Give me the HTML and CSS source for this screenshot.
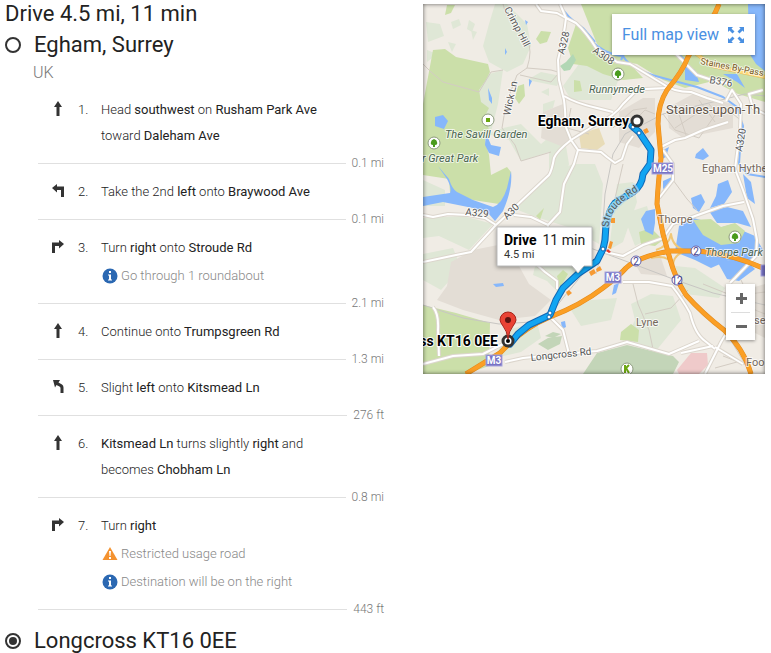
FILE: index.html
```html
<!DOCTYPE html>
<html lang="en">
<head>
    <meta charset="UTF-8">
    <meta name="viewport" content="width=device-width, initial-scale=1.0">
    <title>Egham, Surrey to Longcross KT16 0EE</title>
    <link rel="stylesheet" href="styles.css">
</head>
<body>
    <!-- shared icons -->
    <svg class="sprite" aria-hidden="true">
        <symbol id="straight" viewBox="0 0 16 16"><path d="M8 0l4 6H9.500V15h-3V6H4z"/></symbol>
        <symbol id="left" viewBox="0 0 16 16"><path d="M2 5l5-4v2.500h7V14h-3V7H7v2.500z"/></symbol>
        <symbol id="right" viewBox="0 0 16 16"><path d="M14 5L9 1v2.500H2V14h3V7h4v2.500z"/></symbol>
        <symbol id="slight" viewBox="0 0 16 16"><path d="M3 1h7L8.500 3.500l3.500 2q1.500 1 1.500 3V14h-3V9q0-1-1-1.600L6.500 6 5 8.500z"/></symbol>
        <symbol id="info" viewBox="0 0 16 16"><circle cx="8" cy="8" r="7.500" fill="#2b68b2"/><path fill="#fff" d="M7 3h2v2H7zM6 6.500h3v5h1v1H6v-1h1v-4H6z"/></symbol>
        <symbol id="warn" viewBox="0 0 16 16"><path fill="#f4922f" d="M8 1l7.500 13H.5z"/><path fill="#fff" d="M7 5h2l-.5 5h-1zM7 11h2v2H7z"/></symbol>
    </svg>

    <main class="page">
        <div class="directions">
            <h1>Drive 4.5 mi, 11 min</h1>
            <div class="place">
                <svg class="dot" viewBox="0 0 16 16"><circle cx="8" cy="8" r="7"/></svg>
                <h2>Egham, Surrey</h2>
            </div>
            <p class="country">UK</p>

            <ol class="steps">
                <li>
                    <div class="step">
                        <svg class="arrow"><use href="#straight"/></svg>
                        <span class="num">1.</span>
                        <p>Head <b>southwest</b> on <b>Rusham Park Ave</b> toward <b>Daleham Ave</b></p>
                    </div>
                    <div class="dist">0.1 mi</div>
                </li>
                <li>
                    <div class="step">
                        <svg class="arrow"><use href="#left"/></svg>
                        <span class="num">2.</span>
                        <p>Take the 2nd <b>left</b> onto <b>Braywood Ave</b></p>
                    </div>
                    <div class="dist">0.1 mi</div>
                </li>
                <li>
                    <div class="step">
                        <svg class="arrow"><use href="#right"/></svg>
                        <span class="num">3.</span>
                        <p>Turn <b>right</b> onto <b>Stroude Rd</b></p>
                    </div>
                    <div class="note"><svg><use href="#info"/></svg>Go through 1 roundabout</div>
                    <div class="dist">2.1 mi</div>
                </li>
                <li>
                    <div class="step">
                        <svg class="arrow"><use href="#straight"/></svg>
                        <span class="num">4.</span>
                        <p>Continue onto <b>Trumpsgreen Rd</b></p>
                    </div>
                    <div class="dist">1.3 mi</div>
                </li>
                <li>
                    <div class="step">
                        <svg class="arrow"><use href="#slight"/></svg>
                        <span class="num">5.</span>
                        <p>Slight <b>left</b> onto <b>Kitsmead Ln</b></p>
                    </div>
                    <div class="dist">276 ft</div>
                </li>
                <li>
                    <div class="step">
                        <svg class="arrow"><use href="#straight"/></svg>
                        <span class="num">6.</span>
                        <p><b>Kitsmead Ln</b> turns slightly <b>right</b> and becomes <b>Chobham Ln</b></p>
                    </div>
                    <div class="dist">0.8 mi</div>
                </li>
                <li>
                    <div class="step">
                        <svg class="arrow"><use href="#right"/></svg>
                        <span class="num">7.</span>
                        <p>Turn <b>right</b></p>
                    </div>
                    <div class="note"><svg><use href="#warn"/></svg>Restricted usage road</div>
                    <div class="note"><svg><use href="#info"/></svg>Destination will be on the right</div>
                    <div class="dist">443 ft</div>
                </li>
            </ol>

            <div class="place end">
                <svg class="dot" viewBox="0 0 16 16"><circle cx="8" cy="8" r="7"/><circle class="fill" cx="8" cy="8" r="4"/></svg>
                <h2>Longcross KT16 0EE</h2>
            </div>
        </div>

        <div class="map">
            <svg class="tiles" viewBox="0 0 342 370" preserveAspectRatio="xMidYMid slice">
                <defs>
                    <g id="majors">
                        <path d="M137 0L143 14Q141 32 135 56L136 76 141 96Q143 112 142 121L148 136 155 146 151 160 141 180 137 208 125 221"/>
                        <path d="M0 258L33 251 48 248 73 221 126 171Q129 166 131 154 134 147 148 136L172 121Q192 112 200 100L212 88 222 85 244 84"/>
                        <path d="M113 0L118 7 134 9 143 14 153 19Q163 28 173 44L194 58 207 60 240 80Q250 88 268 88L284 94 300 99"/>
                        <path d="M252 49L274 71 292 77 309 80M303 97L309 86 318 100 317 126 312 165 320 186 330 215 334 236 333 252 312 274 307 279"/>
                        <path d="M0 211L10 213 25 210 45 211 62 214 73 221M91 211L108 213 125 221 124 233"/>
                        <path d="M141 92Q152 99 174 104L190 108M155 146L178 148 184 153 192 159 199 155 204 140 210 132"/>
                        <path d="M236 144L252 136 262 134 280 126 305 118M240 146L250 160 250 176 236 194"/>
                        <path d="M182 248L200 252 220 241 240 234 250 220 272 212 300 202 321 198"/>
                        <path d="M200 278L226 278 249 282Q260 296 267 309 272 330 282 337L292 345M290 342L258 349M282 370L298 338 310 318M292 343L320 360"/>
                        <path d="M10 303Q16 310 15 326L16 352M0 360L30 352 60 350 80 340M82 358L100 354 140 350 174 347 204 338 246 350 276 337"/>
                        <path d="M127 313L140 326 146 350M113 260L122 268 134 277 134 285M340 86L326 90 330 104 342 110"/>
                    </g>
                    <g id="motorways">
                        <path d="M296 0Q290 16 275 34L265 53Q260 67 244 86 235 100 235 120L238 154Q235 180 234 200L240 230 247 255Q252 274 263 291 280 310 301 326 321 345 328 370"/>
                        <path d="M43 370L77 349Q100 324 127 313 158 301 180 284 196 272 203 264 216 252 248 247L274 247Q310 250 342 265"/>
                    </g>
                    <path id="route" d="M209 122L216 128 228 146 227 160 220 170Q219 182 210 188L192 199Q186 206 183 221L182 236 180 245 174 257 156 269 140 284 133 296 127 311 106 321 95 330 87 340"/>
                    <path id="stroude" d="M186 223Q184 203 224 182"/>
                </defs>

                <rect width="342" height="370" fill="#f0ece5"/>

                <!-- woods and fields -->
                <g fill="#dfe7d6">
                    <path d="M72 0L66 20 60 42 66 58 84 68 100 60 108 42 104 20 84 0z"/>
                    <path d="M66 70L80 66 75 100 68 128 60 120 54 104 54 84z"/>
                    <path d="M64 130L86 136 98 157 126 148 126 171 74 220 96 200 140 180 146 160 142 136 130 130 118 140 98 120 80 124z"/>
                    <path d="M90 204L126 171 150 160 172 160 180 180 176 240 148 224 110 212z"/>
                    <path d="M0 176l22 10v16H0zM0 214l40-2 30 8-24 26-30-14-16 2z"/>
                    <path d="M0 250l30-6 8 20-20 22-18-10zM84 326l30-8 4 16-20 14-26 6zM104 76l14-8 20 4-4 10z"/>
                    <path d="M116 245l50 18-8 8-22 18-12-12-14-6zM208 300l20-10 22 2 8 24-26 32-30-12 10-20zM148 306l20-10 26-2-6 22-30 6z"/>
                    <path d="M194 180l16-2 4 20-14 40-14 8zM200 210l24-8 8 30-20 10zM170 62l26 12-8 22-40 0-8-14 16-22zM252 262l20 2 30 20-6 10-34-4z"/>
                    <path d="M3 18l14 2 4 12-16 6zM28 18l8-3 2 6-8 4zM25 38l8 2-4 8zM46 16l6 4-3 8-5-3zM48 26l6 2-4 8zM4 46l10 4-10 8z"/>
                    <path d="M120 100l12-4-2 8-10 4zM122 110l12-2-6 8zM118 88l8-4v8z"/>
                </g>
                <g fill="#cbdfa9">
                    <path d="M10 46L22 45 33 53 65 60 67 68 63 76 56 86 58 98 66 104 62 112 66 126 62 136 66 151 68 171 84 163 88 168 87 184 76 200 50 196 27 188 26 175 0 171V100z"/>
                    <path d="M0 301L33 309 67 319 66 362 43 370H0z"/>
                    <path d="M24 1h8l-4 8-6 2zM118 27l10 1-4 10-7 2-4-5zM95 82l6-2 1 12-6 8-4-6zM151 76l6 1 2 10-8 1zM121 204l-4 12-4-4zM134 272l6-6 5 4-8 14z"/>
                    <path d="M158 0H342V68L342 98 315 90 290 77 262 84 240 76 214 60 190 56 174 40z"/>
                    <path d="M153 20L174 46 190 58 207 60 220 74 200 76 180 70 164 62 150 60 145 44z"/>
                    <path d="M198 328l10-8 8 6-1 12-18-2zM216 228l12-4 12 12-8 6-14-2z"/>
                </g>
                <g fill="#e3ddd5">
                    <path d="M28 258L50 246 80 240 96 262 106 280 128 296 112 312 76 316 40 306 14 296 24 282z"/>
                    <path d="M120 108l20-8 8 34-10 8-20-8zM196 108l24-14h12v34l-16 16-20-6zM244 104l26-14 40 10v24l-50 10-14-10zM222 252l16 2 6 18-26-2-6-10zM308 290l34-10v54l-28-14z"/>
                </g>
                <path fill="#e8dcb8" d="M156 130l20-6 6 16-8 6-16-2z"/>
                <path fill="#b2d7b5" d="M143 58l7-8 3 6-6 10-6 1-4-5z"/>
                <path fill="#c3d5b8" d="M160 370L174 349 204 341 250 352 256 358 250 370zM115 340l10-6 14-2-2 8-12 6zM122 332l8-4 8 2-8 4z"/>
                <path fill="#efcaca" d="M254 366L268 349 284 349 285 361 276 370H256z"/>

                <!-- water -->
                <g fill="#86b7fb">
                    <path d="M0 193L27 189Q29 184 24 175L15 162 26 175Q29 185 34 188L50 196 70 203Q79 200 84 184L88 167Q90 184 80 207L72 217 65 209 50 204 20 198 0 202z"/>
                    <path d="M63 129l5 12 10 2-2 9-10-3-4-8zM65 84l4 10v6l-3-4zM12 113l8-2 5 6-4 8-9-3zM70 280l10-1 1 3-8 1zM82 44l2 4-2 3zM102 16l3 2-2 3zM106 75l3 2-3 6zM138 318l4-1 1 6-4 2z"/>
                    <path d="M325 0H342V67L333 60 326 49z"/>
                    <path d="M262 60l10 6 4 12-14-2zM234 20l12 8 4 10-8-2zM280 40l8 4-6 6zM300 70l14 0 8 14-8-6z"/>
                    <path d="M223 207l9-2 0 14-2 12-8-4-4-12zM240 177l9-4-3 9-6 3zM273 150l7-6 6 8-6 4-8-2zM268 194l10-4 4 8-6 10-6-4zM295 180l10-4 4 12-8 12-14 4 6-12zM320 170l8 8 4 22-8-6z"/>
                    <path d="M256 222l14-8 16 4 10 6 14-4 8 6 14 6 8 14-10 10-10 4-14-4-18 8-16-8-20-8z"/>
                    <path d="M286 207l18-4 16 4 8 16-14-4-20 0zM294 257l28-2 10 10-16 12-12-2zM196 279l-3 10-4 2 2-10zM240 146l6-3-3 10-4 2z"/>
                </g>
                <path class="river" d="M137 0Q142 12 160 24L172 38M168 36Q180 50 200 52 208 66 240 74L274 83 300 93 314 103 320 122 317 145 316 160 324 170 342 173M198 56L206 40 240 36 262 56"/>
                <path fill="#cbdfa9" d="M270 216l18-1 10 8 14-4 10 8-6 12-18 2-18-10z"/>

                <!-- minor lanes -->
                <g class="lanes">
                    <path d="M80 0Q82 16 104 36 110 46 104 64L94 71Q86 90 82 106L79 124 92 141 98 157 128 148"/>
                    <path d="M0 60L8 68 20 78 56 88 68 68 80 66M104 64L128 66 135 68M97 71L128 78 135 70"/>
                    <path d="M173 270L186 220 200 160M210 280L215 300 226 326 230 345M250 176L264 195 274 206M265 286L248 304 222 310"/>
                    <path d="M240 110l12 16 24 8 14-20 8-12M252 124l30-20M264 134l-10-30M300 102l20 16M148 104l-4 20 22 6M188 112l20 8 14-14 10 4M190 124l20-18 14-2M280 280l30 12 32-4M318 276l14 30 10 4"/>
                    <path d="M286 100l12 14M276 96l16 22M300 352l26 10M304 330l18 30M292 364l22-6"/>
                </g>
                <path class="rail" d="M342 92L322 90 290 98 240 110 202 130 190 150 182 190 178 248 140 294 126 312"/>
                <path class="rail" d="M162 242L205 258 250 275 290 289 342 301M0 301L40 314 76 320 108 318 127 311"/>
                <path fill="none" stroke="#f0c878" stroke-width="2" d="M233 246Q246 242 248 230 250 244 264 247 250 250 250 262 246 250 228 254"/>

                <use class="casing" href="#majors"/>
                <use class="road" href="#majors"/>
                <path class="bypass-edge" d="M268 46L290 62 342 73"/>
                <path class="bypass" d="M268 46L290 62 342 73"/>
                <use class="motor-edge" href="#motorways"/>
                <use class="motor" href="#motorways"/>

                <use class="route-edge" href="#route"/>
                <use class="route" href="#route"/>
                <g fill="#fff" stroke="#0c65b0">
                    <circle cx="210" cy="123" r="2"/>
                    <circle cx="216" cy="129" r="2"/>
                    <circle cx="180" cy="245" r="2"/>
                    <circle cx="127" cy="309" r="2"/>
                    <circle cx="126" cy="313" r="2"/>
                </g>
                <g fill="#f79a33">
                    <path d="M220 126l4-2 2 4-4 2zM188 214h4v5h-4zM143 288l3-2 3 3-4 3zM166 268l5-3 2 4-5 3zM173 265l4-3 2 4-5 2zM187 237l3 1-2 7-3-1z"/>
                    <path fill="#e43b2c" d="M183 247l2-2 3 3-2 1z"/>
                </g>

                <!-- road shields -->
                <g class="shield">
                    <rect x="229" y="159" width="21" height="11"/><text x="240" y="168">M25</text>
                    <rect x="182" y="268" width="16" height="11"/><text x="190" y="277">M3</text>
                    <rect x="63" y="351" width="16" height="11"/><text x="71" y="360">M3</text>
                    <rect x="338" y="261" width="16" height="11"/>
                </g>
                <g class="junction">
                    <circle cx="213" cy="257" r="5"/><text x="213" y="261">2</text>
                    <circle cx="273" cy="247" r="5"/><text x="273" y="251">2</text>
                    <circle cx="254" cy="276" r="5"/><text x="254" y="280">12</text>
                </g>

                <!-- park pins -->
                <g>
                    <circle class="pin" cx="65" cy="116" r="6"/><path fill="#6ba611" d="M63 114h4v4h-4z"/>
                    <circle class="pin" cx="11" cy="139" r="6"/><path fill="#4a9b1d" d="M11 135q3 1 3 3 1 3-2 3v2h-2v-2q-3 0-2-3 0-2 3-3z"/>
                    <circle class="pin" cx="195" cy="70" r="6"/><path fill="#4a9b1d" d="M195 66q3 1 3 3 1 3-2 3v2h-2v-2q-3 0-2-3 0-2 3-3z"/>
                    <circle class="pin" cx="312" cy="233" r="6"/><path fill="#4a9b1d" d="M312 229q3 1 3 3 1 3-2 3v2h-2v-2q-3 0-2-3 0-2 3-3z"/>
                    <circle class="pin" cx="204" cy="365" r="6"/><path fill="none" stroke="#6ba611" stroke-width="2" d="M202 361v8M206 361l-3 3 3 5"/>
                </g>

                <!-- labels -->
                <g class="label road-name">
                    <text transform="translate(81 5) rotate(62)">Crimp Hill</text>
                    <text transform="translate(141 51) rotate(-76)">A328</text>
                    <text transform="translate(169 48) rotate(34)">A308</text>
                    <text transform="translate(87 112) rotate(-78)">Wick Ln</text>
                    <text transform="translate(42 211) rotate(6)">A329</text>
                    <text transform="translate(84 216) rotate(-44)">A30</text>
                    <text transform="translate(319 148) rotate(-80)">A320</text>
                    <text transform="translate(286 79) rotate(10)">B376</text>
                    <text transform="translate(108 357) rotate(-6)">Longcross Rd</text>
                    <text class="on-route"><textPath href="#stroude">Stroude Rd</textPath></text>
                    <text class="brown" transform="translate(277 60) rotate(11)">Staines By-Pass</text>
                </g>
                <g class="label park">
                    <text x="22" y="134">The Savill Garden</text>
                    <text x="-1" y="158">r Great Park</text>
                    <text x="166" y="89">Runnymede</text>
                    <text x="282" y="252">Thorpe Park</text>
                </g>
                <g class="label town">
                    <text x="235" y="219">Thorpe</text>
                    <text x="279" y="168">Egham Hythe</text>
                    <text x="213" y="322">Lyne</text>
                    <text x="331" y="320">se</text>
                    <text x="323" y="362">Foo</text>
                    <text class="big" x="243" y="110">Staines-upon-Th</text>
                </g>

                <!-- start and end -->
                <circle class="stop" cx="214" cy="117" r="5"/>
                <circle class="stop" cx="85" cy="337" r="5"/><circle cx="85" cy="337" r="2"/>
                <path fill="#ea4335" stroke="#a5251c" d="M85 335Q84 327 80 322 77 318 77 316a8 8 0 0 1 16 0q0 2-3 6-4 5-5 13z"/>
                <circle cx="85" cy="316" r="3" fill="#5e1411"/>
                <g class="label stop-name">
                    <text x="206" y="122">Egham, Surrey</text>
                    <text x="75" y="342">ss KT16 0EE</text>
                </g>

                <!-- route bubble -->
                <path class="bubble" d="M74 223h95v39h-8l-6 7-6-7H74z"/>
                <text class="bubble-text" x="81" y="241"><tspan class="strong">Drive</tspan><tspan dx="6">11 min</tspan></text>
                <text class="bubble-small" x="81" y="254">4.5 mi</text>
            </svg>

            <a class="full" href="#">Full map view
                <svg viewBox="0 0 16 16"><path d="M0 0h5L3.500 1.500 6.500 4.500 4.500 6.500 1.500 3.500 0 5zM16 0v5l-1.500-1.500-3 3-2-2 3-3L11 0zM0 16v-5l1.500 1.500 3-3 2 2-3 3L5 16zM16 16h-5l1.500-1.500-3-3 2-2 3 3L16 11z"/></svg>
            </a>
            <div class="zoom">
                <button type="button" aria-label="Zoom in"><svg viewBox="0 0 12 12"><path d="M5 1h3v4h4v3H8v4H5V8H1V5h4z"/></svg></button>
                <button type="button" aria-label="Zoom out"><svg viewBox="0 0 12 12"><path d="M1 5h11v3H1z"/></svg></button>
            </div>
        </div>
    </main>
</body>
</html>
```
FILE: styles.css
```css
*{
    margin: 0;
    padding: 0;
    box-sizing: border-box;
}
body{
    font-family: Roboto, "Liberation Sans", sans-serif;
    color: #222;
    background-color: white;
}
.sprite{
    display: none;
}
.page{
    display: grid;
    grid-template-columns: 10fr 9fr;
    gap: 38px;
    align-items: start;
    padding: 3px 6px 0 5px;
}
h1, h2{
    font-size: 22px;
    line-height: 22px;
    font-weight: 400;
}
.place{
    display: flex;
    align-items: center;
    gap: 13px;
    margin-top: 8px;
}
.place h2{
    line-height: 24px;
}
.place.end{
    margin-top: 5px;
}
.dot{
    width: 16px;
    height: 16px;
    fill: none;
    stroke: #333;
    stroke-width: 2;
}
.dot .fill{
    fill: #333;
    stroke: none;
}
.country{
    margin: 5px 0 13px 28px;
    font-size: 16px;
    line-height: 21px;
    font-weight: 300;
    color: #777;
}

/* steps */
.steps{
    list-style: none;
    margin-left: 33px;
    font-size: 13px;
    line-height: 26px;
    font-weight: 300;
}
.steps b{
    font-weight: 400;
}
.step{
    display: grid;
    grid-template-columns: 40px 23px 1fr;
    padding: 1px 50px 0 0;
}
.arrow{
    width: 16px;
    height: 16px;
    margin: 4px 0 0 12px;
    fill: #333;
}
.note{
    display: flex;
    align-items: center;
    gap: 3px;
    padding: 2px 0 0 64px;
    color: #888;
}
.note svg{
    width: 16px;
    height: 16px;
}
.dist{
    display: flex;
    align-items: center;
    gap: 6px;
    padding-right: 1px;
    font-size: 12px;
    line-height: 29px;
    color: #777;
}
.dist::before{
    content: "";
    flex: 1;
    border-top: 1px solid #e0e0e0;
}

/* map */
.map{
    position: relative;
    margin-top: 1px;
    aspect-ratio: 342 / 370;
    overflow: hidden;
}
.map::after{
    content: "";
    position: absolute;
    inset: 0;
    box-shadow: inset 0 0 4px rgba(0, 0, 0, 0.6);
    pointer-events: none;
}
.tiles{
    display: block;
    width: 100%;
    height: 100%;
}
.tiles path, .tiles use{
    stroke-linejoin: round;
}
.river{
    fill: none;
    stroke: #86b7fb;
    stroke-width: 2;
}
.lanes{
    fill: none;
    stroke: #d3ccc3;
}
.rail{
    fill: none;
    stroke: #c8c6c3;
}
.casing, .road, .bypass, .bypass-edge, .motor, .motor-edge, .route, .route-edge{
    fill: none;
}
.casing{
    stroke: #dcd6cd;
    stroke-width: 4;
}
.road{
    stroke: white;
    stroke-width: 2;
}
.bypass-edge{
    stroke: #e3bd62;
    stroke-width: 4;
}
.bypass{
    stroke: #ffdc78;
    stroke-width: 3;
}
.motor-edge{
    stroke: #e28b1d;
    stroke-width: 5;
}
.motor{
    stroke: #fb9f25;
    stroke-width: 4;
}
.route-edge{
    stroke: #1267b4;
    stroke-width: 7;
    stroke-linecap: round;
}
.route{
    stroke: #12a5f2;
    stroke-width: 5;
    stroke-linecap: round;
}
.shield rect{
    fill: #7773c4;
    stroke: #a7a4dd;
}
.shield text{
    fill: white;
    font-size: 10px;
    font-weight: 700;
    text-anchor: middle;
}
.junction circle{
    fill: white;
    stroke: #6663ad;
}
.junction text{
    fill: #45438f;
    font-size: 10px;
    text-anchor: middle;
}
.pin{
    fill: white;
    stroke: #8e9b7f;
}
.label{
    paint-order: stroke;
    stroke: rgba(255, 255, 255, 0.7);
    stroke-width: 2px;
    stroke-linejoin: round;
}
.road-name{
    font-size: 10px;
    fill: #555;
}
.road-name .brown{
    font-size: 9px;
    fill: #7a5a1c;
}
.road-name .on-route{
    stroke: rgba(190, 225, 240, 0.7);
    stroke-width: 3px;
}
.park{
    font-size: 11px;
    font-style: italic;
    fill: #4a6450;
}
.town{
    font-size: 11px;
    fill: #75695d;
}
.town .big{
    font-size: 13px;
    fill: #625549;
}
.stop{
    fill: white;
    stroke: #333;
    stroke-width: 3;
}
.stop-name{
    font-size: 14px;
    font-weight: 700;
    fill: black;
    stroke: white;
    text-anchor: end;
}
.bubble{
    fill: white;
    stroke: #bbb;
    filter: drop-shadow(0 1px 2px rgba(0, 0, 0, 0.4));
}
.bubble-text{
    font-size: 14px;
    fill: #222;
}
.bubble-text .strong{
    font-weight: 700;
    fill: black;
}
.bubble-small{
    font-size: 11px;
    fill: #333;
}
.full{
    position: absolute;
    top: 10px;
    right: 10px;
    display: flex;
    align-items: center;
    gap: 9px;
    padding: 0 11px 0 10px;
    font-size: 16px;
    line-height: 41px;
    color: #4a90e2;
    text-decoration: none;
    background-color: white;
    box-shadow: 0 1px 3px rgba(0, 0, 0, 0.4);
}
.full svg{
    width: 16px;
    height: 16px;
    fill: #4a90e2;
}
.zoom{
    position: absolute;
    right: 10px;
    bottom: 34px;
    width: 29px;
    background-color: white;
    box-shadow: 0 1px 3px rgba(0, 0, 0, 0.4);
}
.zoom button{
    display: flex;
    align-items: center;
    justify-content: center;
    width: 100%;
    height: 28px;
    border: none;
    background: none;
    cursor: pointer;
}
.zoom button + button::before{
    content: "";
    position: absolute;
    top: 28px;
    left: 5px;
    right: 5px;
    border-top: 1px solid #ddd;
}
.zoom svg{
    width: 12px;
    height: 12px;
    fill: #666;
}
```
